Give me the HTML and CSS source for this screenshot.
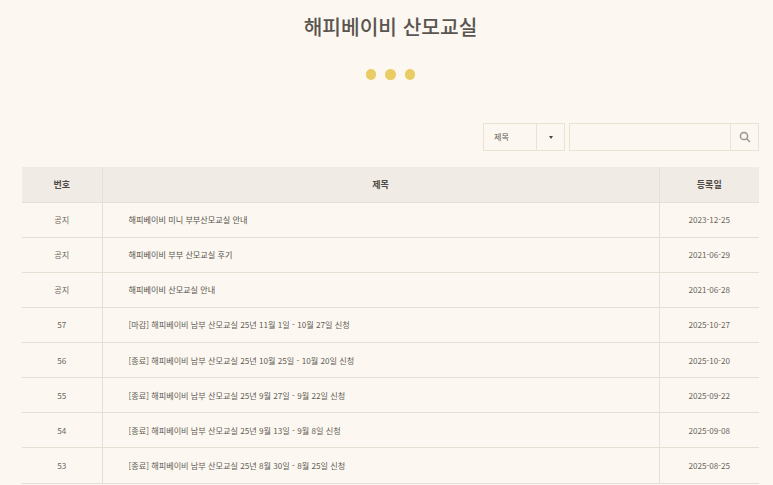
FILE: index.html
```html
<!DOCTYPE html>
<html lang="ko">
<head>
<meta charset="utf-8">
<title>해피베이비 산모교실</title>
<link rel="stylesheet" href="styles.css">
</head>
<body>
<main class="page">
  <h1 class="title">해피베이비 산모교실</h1>
  <div class="dots"><span class="dot"></span><span class="dot"></span><span class="dot"></span></div>
  <form class="search">
    <div class="select">
      <span class="select-label">제목</span>
      <span class="select-arrow"><span class="caret"></span></span>
    </div>
    <div class="query">
      <span class="query-input"></span>
      <span class="query-btn">
        <svg class="search-icon" width="12" height="12" viewBox="0 0 12 12" aria-hidden="true"><circle cx="5" cy="5" r="3.6"/><path d="M7.7 7.7 11 11"/></svg>
      </span>
    </div>
  </form>
  <table class="board">
    <thead>
      <tr><th class="c-num">번호</th><th class="c-title">제목</th><th class="c-date">등록일</th></tr>
    </thead>
    <tbody>
      <tr><td>공지</td><td class="subject notice">해피베이비 미니 부부산모교실 안내</td><td>2023-12-25</td></tr>
      <tr><td>공지</td><td class="subject notice">해피베이비 부부 산모교실 후기</td><td>2021-06-29</td></tr>
      <tr><td>공지</td><td class="subject notice">해피베이비 산모교실 안내</td><td>2021-06-28</td></tr>
      <tr><td>57</td><td class="subject">[마감] 해피베이비 남부 산모교실 25년 11월 1일 - 10월 27일 신청</td><td>2025-10-27</td></tr>
      <tr><td>56</td><td class="subject">[종료] 해피베이비 남부 산모교실 25년 10월 25일 - 10월 20일 신청</td><td>2025-10-20</td></tr>
      <tr><td>55</td><td class="subject">[종료] 해피베이비 남부 산모교실 25년 9월 27일 - 9월 22일 신청</td><td>2025-09-22</td></tr>
      <tr><td>54</td><td class="subject">[종료] 해피베이비 남부 산모교실 25년 9월 13일 - 9월 8일 신청</td><td>2025-09-08</td></tr>
      <tr><td>53</td><td class="subject">[종료] 해피베이비 남부 산모교실 25년 8월 30일 - 8월 25일 신청</td><td>2025-08-25</td></tr>
    </tbody>
  </table>
</main>
</body>
</html>
```
FILE: styles.css
```css
* { box-sizing: border-box; }
html, body { margin: 0; height: 485px; overflow: hidden; }
body {
  background: #fcf8f1;
  color: #6b655e;
  font-family: "Noto Sans CJK KR", "Noto Sans", sans-serif;
  font-size: 8.15px;
}
.page { padding: 0 14px 0 22px; }
.title {
  margin: 0;
  padding-top: 11px;
  height: 47px;
  text-align: center;
  font-size: 20.3px;
  line-height: 31px;
  font-weight: 500;
  color: #5a5550;
}
.dots {
  display: flex;
  justify-content: center;
  gap: 9px;
  margin-top: 22px;
  height: 11px;
}
.dot { width: 10.5px; height: 10.5px; border-radius: 50%; background: #e9cc63; }
.search {
  display: flex;
  justify-content: flex-end;
  gap: 4px;
  margin-top: 43px;
  height: 28px;
}
.select, .query {
  display: flex;
  align-items: center;
  border: 1px solid #e9e3d4;
  height: 28px;
}
.select { width: 82px; }
.select-label { flex: 1; padding-left: 10px; padding-bottom: 1px; color: #5f5a54; }
.select-arrow {
  width: 28px;
  height: 26px;
  border-left: 1px solid #e9e3d4;
  display: flex;
  align-items: center;
  justify-content: center;
}
.caret {
  width: 0; height: 0;
  border-left: 2.5px solid transparent;
  border-right: 2.5px solid transparent;
  border-top: 3px solid #4a4642;
}
.query { width: 190px; }
.query-input { flex: 1; }
.query-btn {
  width: 28px;
  height: 26px;
  border-left: 1px solid #e9e3d4;
  display: flex;
  align-items: center;
  justify-content: center;
}
.search-icon { fill: none; stroke: #98948e; stroke-width: 1.5; }
.board {
  width: 737px;
  margin-top: 16px;
  border-collapse: collapse;
  table-layout: fixed;
}
.board th {
  height: 35px;
  background: #f0ece5;
  border-bottom: 1px solid #e6e0d4;
  color: #4f4a45;
  font-weight: 700;
  font-size: 9px;
}
.board td {
  height: 35.15px;
  padding-bottom: 1px;
  text-align: center;
  border-bottom: 1px solid #e6e0d4;
}
.board th + th, .board td + td { border-left: 1px solid #e6e0d4; }
.c-num { width: 80px; }
.c-date { width: 100px; }
.board td.subject { text-align: left; padding-left: 26px; color: #625c55; }
.board td.notice { color: #57524c; }
```
